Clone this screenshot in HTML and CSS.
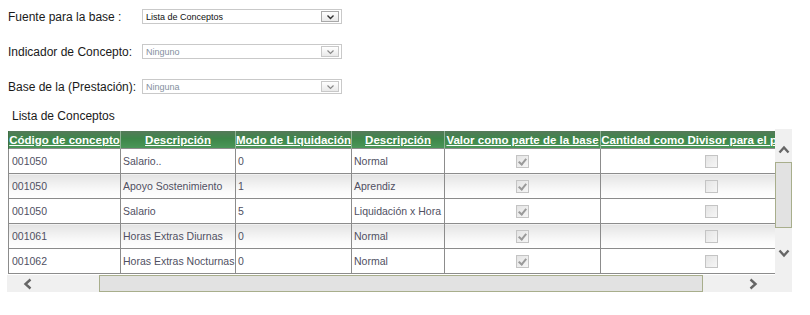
FILE: index.html
```html
<!DOCTYPE html>
<html>
<head>
    <title>Fuente para la base</title>
    <link rel="stylesheet" href="styles.css">
</head>
<body>
    <div class="form">
        <div class="form-row">
            <label>Fuente para la base :</label>
            <div class="select">
                <span class="select-text">Lista de Conceptos</span>
                <span class="select-btn"><svg width="9" height="6" viewBox="0 0 9 6"><polyline points="1.5,1.5 4.5,4.5 7.5,1.5" fill="none" stroke="#333" stroke-width="1.4"/></svg></span>
            </div>
        </div>
        <div class="form-row">
            <label>Indicador de Concepto:</label>
            <div class="select disabled">
                <span class="select-text">Ninguno</span>
                <span class="select-btn"><svg width="9" height="6" viewBox="0 0 9 6"><polyline points="1.5,1.5 4.5,4.5 7.5,1.5" fill="none" stroke="#888" stroke-width="1.2"/></svg></span>
            </div>
        </div>
        <div class="form-row">
            <label>Base de la (Prestación):</label>
            <div class="select disabled">
                <span class="select-text">Ninguna</span>
                <span class="select-btn"><svg width="9" height="6" viewBox="0 0 9 6"><polyline points="1.5,1.5 4.5,4.5 7.5,1.5" fill="none" stroke="#888" stroke-width="1.2"/></svg></span>
            </div>
        </div>
    </div>

    <div class="caption">Lista de Conceptos</div>

    <div class="grid-wrap">
        <div class="grid-main">
            <div class="grid-view">
                <table class="grid">
                    <colgroup>
                        <col style="width:112px"><col style="width:115px"><col style="width:116px">
                        <col style="width:93px"><col style="width:156px"><col style="width:222px">
                    </colgroup>
                    <thead>
                        <tr>
                            <th><a>Código de concepto</a></th>
                            <th><a>Descripción</a></th>
                            <th><a>Modo de Liquidación</a></th>
                            <th><a>Descripción</a></th>
                            <th><a>Valor como parte de la base</a></th>
                            <th><a>Cantidad como Divisor para el promedio</a></th>
                        </tr>
                    </thead>
                    <tbody>
                        <tr>
                            <td>001050</td><td>Salario..</td><td>0</td><td>Normal</td>
                            <td class="center"><span class="chk checked"></span></td>
                            <td class="center"><span class="chk"></span></td>
                        </tr>
                        <tr class="alt">
                            <td>001050</td><td>Apoyo Sostenimiento</td><td>1</td><td>Aprendiz</td>
                            <td class="center"><span class="chk checked"></span></td>
                            <td class="center"><span class="chk"></span></td>
                        </tr>
                        <tr>
                            <td>001050</td><td>Salario</td><td>5</td><td>Liquidación x Hora</td>
                            <td class="center"><span class="chk checked"></span></td>
                            <td class="center"><span class="chk"></span></td>
                        </tr>
                        <tr class="alt">
                            <td>001061</td><td>Horas Extras Diurnas</td><td>0</td><td>Normal</td>
                            <td class="center"><span class="chk checked"></span></td>
                            <td class="center"><span class="chk"></span></td>
                        </tr>
                        <tr>
                            <td>001062</td><td>Horas Extras Nocturnas</td><td>0</td><td>Normal</td>
                            <td class="center"><span class="chk checked"></span></td>
                            <td class="center"><span class="chk"></span></td>
                        </tr>
                    </tbody>
                </table>
            </div>
            <div class="hscroll">
                <span class="arrow"><svg width="10" height="12" viewBox="0 0 10 12"><polyline points="7.5,1.5 2.5,6 7.5,10.5" fill="none" stroke="#666" stroke-width="2.4"/></svg></span>
                <div class="htrack"><div class="hthumb"></div></div>
                <span class="arrow"><svg width="10" height="12" viewBox="0 0 10 12"><polyline points="2.5,1.5 7.5,6 2.5,10.5" fill="none" stroke="#666" stroke-width="2.4"/></svg></span>
            </div>
        </div>
        <div class="vscroll">
            <span class="varrow up"><svg width="12" height="10" viewBox="0 0 12 10"><polyline points="1.5,7.5 6,2.5 10.5,7.5" fill="none" stroke="#666" stroke-width="2.4"/></svg></span>
            <div class="vtrack"><div class="vthumb"></div></div>
            <span class="varrow down"><svg width="12" height="10" viewBox="0 0 12 10"><polyline points="1.5,2.5 6,7.5 10.5,2.5" fill="none" stroke="#666" stroke-width="2.4"/></svg></span>
        </div>
    </div>
</body>
</html>
```

FILE: styles.css
```css
body {
    font-family: "Liberation Sans", Arial, sans-serif;
    margin: 0;
    padding: 0;
    background-color: #fff;
    color: #222;
}
.form {
    padding: 9px 0 0 8px;
    display: flex;
    flex-direction: column;
    gap: 20px;
}
.form-row {
    display: flex;
    align-items: center;
    height: 15px;
}
.form-row label {
    width: 134px;
    font-size: 12px;
    color: #1a1a1a;
}
.select {
    width: 198px;
    height: 13px;
    border: 1px solid #c9c9c9;
    display: flex;
    align-items: center;
    justify-content: space-between;
    background-color: #fff;
}
.select-text {
    font-size: 9px;
    padding-left: 3px;
    color: #111;
}
.select.disabled .select-text {
    color: #8590a0;
}
.select-btn {
    width: 16px;
    height: 9px;
    margin-right: 2px;
    border: 1px solid #a8a8a8;
    background: linear-gradient(#fff, #e9e9e9);
    display: flex;
    align-items: center;
    justify-content: center;
}
.select.disabled .select-btn {
    border-color: #c8c8c8;
}
.caption {
    font-size: 12px;
    line-height: 14px;
    color: #1a1a1a;
    padding: 15px 0 6px 12px;
}
.grid-wrap {
    display: flex;
    margin-left: 7px;
    width: 785px;
}
.grid-main {
    width: 768px;
}
.grid-view {
    width: 768px;
    height: 143px;
    padding-top: 2px;
    overflow: hidden;
}
.grid {
    border-collapse: collapse;
    table-layout: fixed;
    width: 814px;
    margin-left: 1px;
    font-size: 10.5px;
}
.grid th {
    height: 17px;
    padding: 0;
    background: linear-gradient(#55795a, #3d8649 45%, #4a9658);
    border-left: 1px solid #8fb295;
    white-space: nowrap;
    overflow: hidden;
    text-align: center;
    font-weight: bold;
    font-size: 11.5px;
}
.grid th:first-child {
    border-left: 1px solid #3f7046;
}
.grid th a {
    color: #fff;
    text-decoration: underline;
}
.grid td {
    height: 24px;
    padding: 0 0 0 2px;
    border: 1px solid #8c8c8c;
    color: #505062;
    white-space: nowrap;
    overflow: hidden;
}
.grid td:first-child {
    padding-left: 3px;
}
.grid tr.alt td {
    background: linear-gradient(#e3e3e3, #fbfbfb 70%, #fff);
}
.grid td.center {
    text-align: center;
    padding: 0;
}
.chk {
    display: inline-block;
    width: 11px;
    height: 11px;
    border: 1px solid #c4c4c4;
    background: linear-gradient(135deg, #e4e4e4, #f6f6f6);
    vertical-align: middle;
    position: relative;
}
.chk.checked::after {
    content: "";
    position: absolute;
    left: 3px;
    top: 1px;
    width: 3px;
    height: 6px;
    border: solid #9a9a9a;
    border-width: 0 2px 2px 0;
    transform: rotate(40deg);
}
.hscroll {
    margin-top: 1px;
    height: 17px;
    background-color: #f0f0f0;
    display: flex;
    align-items: center;
}
.hscroll .arrow {
    width: 92px;
    display: flex;
    justify-content: center;
    padding-right: 50px;
    box-sizing: border-box;
}
.hscroll .arrow:last-child {
    width: 72px;
    padding-right: 0;
    padding-left: 28px;
}
.htrack {
    flex: 1;
    height: 17px;
}
.hthumb {
    width: 602px;
    height: 15px;
    border: 1px solid #a8ae8c;
    background-color: #e2e2e2;
}
.vscroll {
    width: 17px;
    height: 163px;
    background-color: #f0f0f0;
    display: flex;
    flex-direction: column;
}
.varrow {
    display: flex;
    justify-content: center;
    align-items: center;
    box-sizing: border-box;
}
.varrow.up {
    height: 33px;
    padding-top: 8px;
}
.vtrack {
    height: 78px;
}
.vthumb {
    height: 64px;
    width: 15px;
    border: 1px solid #a8ae8c;
    background-color: #e2e2e2;
}
.varrow.down {
    height: 26px;
}
```
